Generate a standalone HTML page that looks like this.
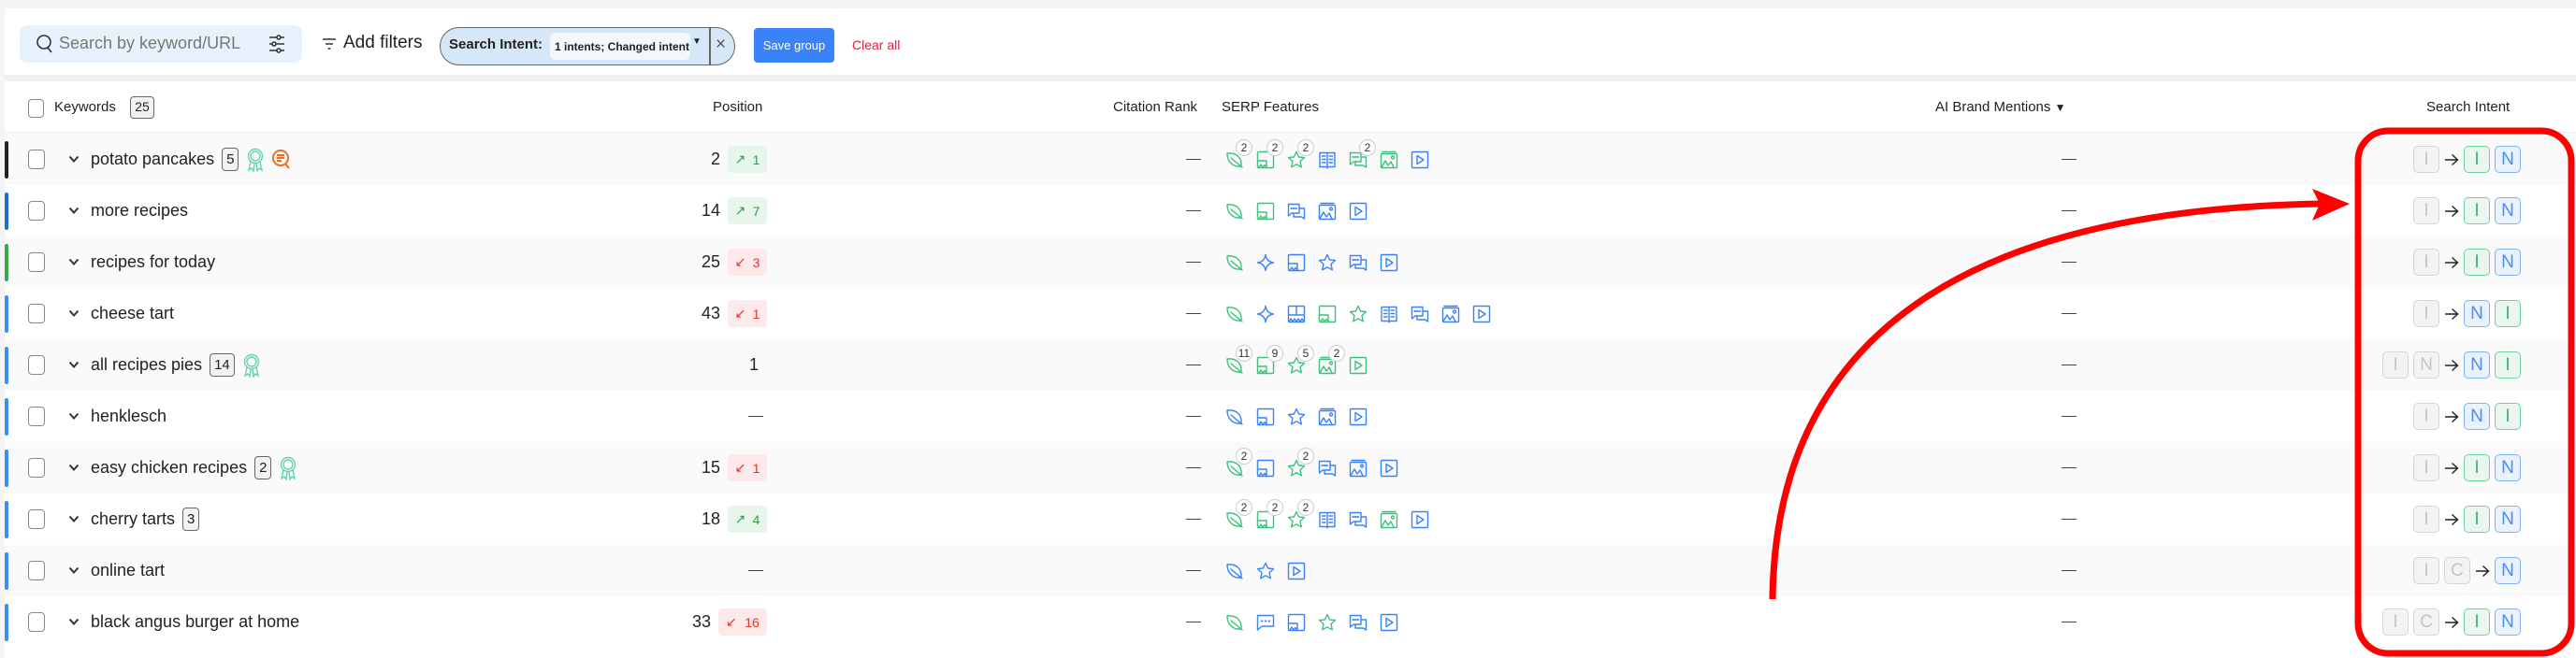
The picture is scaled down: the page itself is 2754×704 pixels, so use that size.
<!DOCTYPE html>
<html><head><meta charset="utf-8">
<style>
*{box-sizing:border-box;margin:0;padding:0}
body{width:2754px;height:704px;overflow:hidden;background:#f3f4f6;font-family:"Liberation Sans",sans-serif;color:#222;position:relative}
.card{position:absolute;left:5px;top:9px;right:0;bottom:0;background:#fff}
.abs{position:absolute}
.sep{position:absolute;left:5px;right:0;top:80px;height:7px;background:#f0f0f0}
.row{position:absolute;left:5px;width:2749px;height:55px}
.row.g{background:#fafafa}
.bar{position:absolute;left:0;top:8px;width:4px;height:40px;border-radius:2px;background:#3b8ff0}
.cb{position:absolute;left:25px;top:17px;width:18px;height:21px;border:1.5px solid #888;border-radius:4px;background:#fff}
.chev{position:absolute;left:68px;top:22px;width:12px;height:10px}
.kw{position:absolute;left:92px;top:0;height:55px;display:flex;align-items:center;font-size:18px;color:#222;white-space:nowrap}
.cnt{display:inline-block;margin-left:8px;border:1.5px solid #666;background:#f2f2f2;border-radius:4px;font-size:15px;padding:2px 4px;line-height:19px}
.rib{margin-left:8px;width:20px;height:26px}
.num{position:absolute;right:1984px;top:17px;font-size:18px;text-align:right}
.bd{position:absolute;left:773px;top:13px;width:42px;height:29px;border-radius:4px;font-size:14px;display:flex;align-items:center;justify-content:space-around;padding:0 4px}
.up{background:#e7f5eb;color:#2aa150}
.dn{background:#fde9e9;color:#e5322d}
.dash{position:absolute;top:27px;width:16px;height:1px;background:#444}
.ic{position:absolute;top:18px;width:20px;height:20px}
.ic svg{width:20px;height:20px;fill:none;stroke:currentColor;stroke-width:1.4;stroke-linejoin:round;stroke-linecap:round}
.gr{color:#3cc27a}.bl{color:#3b82f6}
.c{position:absolute;left:11px;top:-12px;width:18px;height:18px;border-radius:50%;border:1px solid #ccc;background:#fff;font-size:12px;color:#333;text-align:center;line-height:16px}
.it{position:absolute;right:59px;top:13px;display:flex;align-items:center}
.b{width:28px;height:29px;border-radius:5px;border:1.5px solid;font-size:19px;display:flex;align-items:center;justify-content:center;margin-left:5px}
.bg0{background:#f2f3f5;border-color:#d6d6d6;color:#c5c5c5}
.bgG{background:#eaf6ef;border-color:#6fd39f;color:#3cb371}
.bgB{background:#e9f2fd;border-color:#80b2f6;color:#4b8ef0}
.ar{margin-left:5px;width:16px;height:14px}
.hd{position:absolute;top:106px;font-size:15px;color:#222}
</style></head><body>
<svg width="0" height="0" style="position:absolute">
<defs>
<symbol id="leaf" viewBox="0 0 20 20"><path d="M2 3 C11 2 18 7 17 17 C8 18 2 12 2 3 Z M6 8 L18 18"/></symbol>
<symbol id="spk" viewBox="0 0 20 20"><path d="M10 1.5 Q11 9 18.5 10 Q11 11 10 18.5 Q9 11 1.5 10 Q9 9 10 1.5Z"/></symbol>
<symbol id="img" viewBox="0 0 20 20"><rect x="1.5" y="1.5" width="17" height="17" rx="1"/><path d="M1.5 11 H11 V18.5 M3 18 L5 15 L7 18 L9 15.5 L11 18"/></symbol>
<symbol id="top" viewBox="0 0 20 20"><rect x="1.5" y="1.5" width="17" height="17" rx="1"/><path d="M1.5 11 H18.5 M10 2 V11 M2 18 L4 15 L6 18 L8 15 L10 18 L12 15 L14 18 L16 15 L18 18"/></symbol>
<symbol id="star" viewBox="0 0 20 20"><path d="M10 1.5 L12.6 7 L18.5 7.6 L14 11.6 L15.3 17.8 L10 14.8 L4.7 17.8 L6 11.6 L1.5 7.6 L7.4 7 Z"/></symbol>
<symbol id="book" viewBox="0 0 20 20"><path d="M2 2.5 H18 V17.5 H2 Z M10 2.5 V19 M4.5 6 H8 M4.5 9.5 H8 M4.5 13 H8 M12 6 H15.5 M12 9.5 H15.5 M12 13 H15.5"/></symbol>
<symbol id="chat" viewBox="0 0 20 20"><path d="M1.5 2.5 H13 V12 H5 L1.5 15 Z M13 7 H18.5 V18 L15.5 16 H7 V12"/><path d="M4.5 7 h.5 M7 7 h.5 M9.5 7 h.5" stroke-width="2"/></symbol>
<symbol id="gal" viewBox="0 0 20 20"><rect x="1.5" y="3.5" width="17" height="15" rx="1"/><path d="M3 1.5 H17 M2 18 L6 11 L9 16 L12 12 L15 18"/><circle cx="14" cy="7.5" r="1.5"/></symbol>
<symbol id="play" viewBox="0 0 20 20"><rect x="1.5" y="1.5" width="17" height="17" rx="1"/><path d="M7 5.5 L14 10 L7 14.5 Z"/></symbol>
<symbol id="cmt" viewBox="0 0 20 20"><path d="M1.5 2.5 H18.5 V14 H6 L1.5 18 Z"/><path d="M6 8.5 h.5 M9.8 8.5 h.5 M13.5 8.5 h.5" stroke-width="2"/></symbol>
<symbol id="rb" viewBox="0 0 20 26"><circle cx="10" cy="9" r="7.5"/><circle cx="10" cy="9" r="5"/><path d="M5 15 L3 24 L6 22 L8 25 L9 17 M15 15 L17 24 L14 22 L12 25 L11 17"/></symbol>
<symbol id="chv" viewBox="0 0 12 10"><path d="M1.5 2.5 L6 7.5 L10.5 2.5" fill="none" stroke="#333" stroke-width="2"/></symbol>
<symbol id="arr" viewBox="0 0 16 14"><path d="M1 7 H14 M8.5 1.5 L14.5 7 L8.5 12.5" fill="none" stroke="#222" stroke-width="1.4"/></symbol>
</defs></svg>

<div class="card"></div>
<div class="abs" style="left:21px;top:27px;width:302px;height:40px;background:#e8f2fc;border-radius:8px"></div>
<svg class="abs" style="left:38px;top:36px" width="20" height="22" viewBox="0 0 20 22" fill="none" stroke="#333" stroke-width="1.6"><circle cx="9" cy="9" r="7"/><path d="M13 15 L17 20"/></svg>
<div class="abs" style="left:63px;top:36px;font-size:18px;color:#777">Search by keyword/URL</div>
<svg class="abs" style="left:286px;top:36px" width="20" height="22" viewBox="0 0 20 22" fill="none" stroke="#333" stroke-width="1.5"><path d="M2 4 H18 M2 11 H18 M2 18 H18"/><circle cx="12" cy="4" r="2" fill="#e8f2fc"/><circle cx="7" cy="11" r="2" fill="#e8f2fc"/><circle cx="12" cy="18" r="2" fill="#e8f2fc"/></svg>
<svg class="abs" style="left:344px;top:40px" width="16" height="14" viewBox="0 0 16 14" stroke="#333" stroke-width="1.6"><path d="M1 2 H15 M4 7 H12 M6.5 12 H9.5"/></svg>
<div class="abs" style="left:367px;top:35px;font-size:19px;color:#222">Add filters</div>
<div class="abs" style="left:470px;top:29px;width:316px;height:41px;border:1.5px solid #666;border-radius:21px;background:#d6e8f7"></div>
<div class="abs" style="left:480px;top:39px;font-size:15px;font-weight:bold;color:#222">Search Intent:</div>
<div class="abs" style="left:588px;top:35px;width:150px;height:29px;background:#f5f8fb;border-radius:6px"></div>
<div class="abs" style="left:593px;top:43px;font-size:12px;font-weight:bold;color:#222">1 intents; Changed intent</div>
<div class="abs" style="left:740px;top:39px;font-size:10px;color:#222">▼</div>
<div class="abs" style="left:758px;top:30px;width:1.5px;height:39px;background:#666"></div>
<div class="abs" style="left:765px;top:37px;font-size:19px;color:#555">×</div>
<div class="abs" style="left:806px;top:30px;width:86px;height:37px;background:#3a82f7;border-radius:4px;color:#fff;font-size:13px;display:flex;align-items:center;justify-content:center">Save group</div>
<div class="abs" style="left:911px;top:40px;font-size:14px;color:#e0203a">Clear all</div>

<div class="sep"></div>
<div class="abs" style="left:30px;top:106px;width:17px;height:20px;border:1.5px solid #888;border-radius:4px"></div>
<div class="hd" style="left:58px">Keywords</div>
<div class="abs" style="left:139px;top:103px;width:26px;height:24px;border:1.5px solid #666;background:#f2f2f2;border-radius:4px;font-size:14px;text-align:center;line-height:21px">25</div>
<div class="hd" style="left:762px">Position</div>
<div class="hd" style="left:1190px">Citation Rank</div>
<div class="hd" style="left:1306px">SERP Features</div>
<div class="hd" style="left:2069px">AI Brand Mentions <span style="font-size:12px">▼</span></div>
<div class="hd" style="left:2594px">Search Intent</div>
<div class="abs" style="left:5px;right:0;top:141px;height:1px;background:#ececec"></div>

<div class="row g" style="top:143px"><div class="bar" style="background:#222"></div><div class="cb"></div><svg class="chev"><use href="#chv"/></svg>
<div class="kw">potato pancakes<span class="cnt">5</span><svg class="rib" style="color:#62d4b4"><use href="#rb" stroke="currentColor" fill="none" stroke-width="1.4"/></svg><svg width="24" height="24" viewBox="0 0 24 24" fill="none" stroke="#ef6c20" stroke-width="2" style="margin-left:6px"><circle cx="11" cy="10" r="8"/><path d="M7 7 H15 M7 10 H15 M7 13 H12 M16 16 L20 21"/></svg></div>
<div class="num">2</div><div class="bd up"><span>↗</span><span>1</span></div>
<div class="dash" style="left:1263px"></div>
<div class="ic gr" style="left:1305px"><svg><use href="#leaf"/></svg><div class="c">2</div></div>
<div class="ic gr" style="left:1338px"><svg><use href="#img"/></svg><div class="c">2</div></div>
<div class="ic gr" style="left:1371px"><svg><use href="#star"/></svg><div class="c">2</div></div>
<div class="ic bl" style="left:1404px"><svg><use href="#book"/></svg></div>
<div class="ic gr" style="left:1437px"><svg><use href="#chat"/></svg><div class="c">2</div></div>
<div class="ic gr" style="left:1470px"><svg><use href="#gal"/></svg></div>
<div class="ic bl" style="left:1503px"><svg><use href="#play"/></svg></div>
<div class="dash" style="left:2199px"></div>
<div class="it"><div class="b bg0">I</div><svg class="ar"><use href="#arr"/></svg><div class="b bgG">I</div><div class="b bgB">N</div></div>
</div>
<div class="row" style="top:198px"><div class="bar" style="background:#1f6fcf"></div><div class="cb"></div><svg class="chev"><use href="#chv"/></svg>
<div class="kw">more recipes</div>
<div class="num">14</div><div class="bd up"><span>↗</span><span>7</span></div>
<div class="dash" style="left:1263px"></div>
<div class="ic gr" style="left:1305px"><svg><use href="#leaf"/></svg></div>
<div class="ic gr" style="left:1338px"><svg><use href="#img"/></svg></div>
<div class="ic bl" style="left:1371px"><svg><use href="#chat"/></svg></div>
<div class="ic bl" style="left:1404px"><svg><use href="#gal"/></svg></div>
<div class="ic bl" style="left:1437px"><svg><use href="#play"/></svg></div>
<div class="dash" style="left:2199px"></div>
<div class="it"><div class="b bg0">I</div><svg class="ar"><use href="#arr"/></svg><div class="b bgG">I</div><div class="b bgB">N</div></div>
</div>
<div class="row g" style="top:253px"><div class="bar" style="background:#3aa845"></div><div class="cb"></div><svg class="chev"><use href="#chv"/></svg>
<div class="kw">recipes for today</div>
<div class="num">25</div><div class="bd dn"><span>↙</span><span>3</span></div>
<div class="dash" style="left:1263px"></div>
<div class="ic gr" style="left:1305px"><svg><use href="#leaf"/></svg></div>
<div class="ic bl" style="left:1338px"><svg><use href="#spk"/></svg></div>
<div class="ic bl" style="left:1371px"><svg><use href="#img"/></svg></div>
<div class="ic bl" style="left:1404px"><svg><use href="#star"/></svg></div>
<div class="ic bl" style="left:1437px"><svg><use href="#chat"/></svg></div>
<div class="ic bl" style="left:1470px"><svg><use href="#play"/></svg></div>
<div class="dash" style="left:2199px"></div>
<div class="it"><div class="b bg0">I</div><svg class="ar"><use href="#arr"/></svg><div class="b bgG">I</div><div class="b bgB">N</div></div>
</div>
<div class="row" style="top:308px"><div class="bar"></div><div class="cb"></div><svg class="chev"><use href="#chv"/></svg>
<div class="kw">cheese tart</div>
<div class="num">43</div><div class="bd dn"><span>↙</span><span>1</span></div>
<div class="dash" style="left:1263px"></div>
<div class="ic gr" style="left:1305px"><svg><use href="#leaf"/></svg></div>
<div class="ic bl" style="left:1338px"><svg><use href="#spk"/></svg></div>
<div class="ic bl" style="left:1371px"><svg><use href="#top"/></svg></div>
<div class="ic gr" style="left:1404px"><svg><use href="#img"/></svg></div>
<div class="ic gr" style="left:1437px"><svg><use href="#star"/></svg></div>
<div class="ic bl" style="left:1470px"><svg><use href="#book"/></svg></div>
<div class="ic bl" style="left:1503px"><svg><use href="#chat"/></svg></div>
<div class="ic bl" style="left:1536px"><svg><use href="#gal"/></svg></div>
<div class="ic bl" style="left:1569px"><svg><use href="#play"/></svg></div>
<div class="dash" style="left:2199px"></div>
<div class="it"><div class="b bg0">I</div><svg class="ar"><use href="#arr"/></svg><div class="b bgB">N</div><div class="b bgG">I</div></div>
</div>
<div class="row g" style="top:363px"><div class="bar"></div><div class="cb"></div><svg class="chev"><use href="#chv"/></svg>
<div class="kw">all recipes pies<span class="cnt">14</span><svg class="rib" style="color:#62d4b4"><use href="#rb" stroke="currentColor" fill="none" stroke-width="1.4"/></svg></div>
<div class="num" style="right:1943px">1</div>
<div class="dash" style="left:1263px"></div>
<div class="ic gr" style="left:1305px"><svg><use href="#leaf"/></svg><div class="c">11</div></div>
<div class="ic gr" style="left:1338px"><svg><use href="#img"/></svg><div class="c">9</div></div>
<div class="ic gr" style="left:1371px"><svg><use href="#star"/></svg><div class="c">5</div></div>
<div class="ic gr" style="left:1404px"><svg><use href="#gal"/></svg><div class="c">2</div></div>
<div class="ic gr" style="left:1437px"><svg><use href="#play"/></svg></div>
<div class="dash" style="left:2199px"></div>
<div class="it"><div class="b bg0">I</div><div class="b bg0">N</div><svg class="ar"><use href="#arr"/></svg><div class="b bgB">N</div><div class="b bgG">I</div></div>
</div>
<div class="row" style="top:418px"><div class="bar"></div><div class="cb"></div><svg class="chev"><use href="#chv"/></svg>
<div class="kw">henklesch</div>
<div class="dash" style="left:795px"></div>
<div class="dash" style="left:1263px"></div>
<div class="ic bl" style="left:1305px"><svg><use href="#leaf"/></svg></div>
<div class="ic bl" style="left:1338px"><svg><use href="#img"/></svg></div>
<div class="ic bl" style="left:1371px"><svg><use href="#star"/></svg></div>
<div class="ic bl" style="left:1404px"><svg><use href="#gal"/></svg></div>
<div class="ic bl" style="left:1437px"><svg><use href="#play"/></svg></div>
<div class="dash" style="left:2199px"></div>
<div class="it"><div class="b bg0">I</div><svg class="ar"><use href="#arr"/></svg><div class="b bgB">N</div><div class="b bgG">I</div></div>
</div>
<div class="row g" style="top:473px"><div class="bar"></div><div class="cb"></div><svg class="chev"><use href="#chv"/></svg>
<div class="kw">easy chicken recipes<span class="cnt">2</span><svg class="rib" style="color:#62d4b4"><use href="#rb" stroke="currentColor" fill="none" stroke-width="1.4"/></svg></div>
<div class="num">15</div><div class="bd dn"><span>↙</span><span>1</span></div>
<div class="dash" style="left:1263px"></div>
<div class="ic gr" style="left:1305px"><svg><use href="#leaf"/></svg><div class="c">2</div></div>
<div class="ic bl" style="left:1338px"><svg><use href="#img"/></svg></div>
<div class="ic gr" style="left:1371px"><svg><use href="#star"/></svg><div class="c">2</div></div>
<div class="ic bl" style="left:1404px"><svg><use href="#chat"/></svg></div>
<div class="ic bl" style="left:1437px"><svg><use href="#gal"/></svg></div>
<div class="ic bl" style="left:1470px"><svg><use href="#play"/></svg></div>
<div class="dash" style="left:2199px"></div>
<div class="it"><div class="b bg0">I</div><svg class="ar"><use href="#arr"/></svg><div class="b bgG">I</div><div class="b bgB">N</div></div>
</div>
<div class="row" style="top:528px"><div class="bar"></div><div class="cb"></div><svg class="chev"><use href="#chv"/></svg>
<div class="kw">cherry tarts<span class="cnt">3</span></div>
<div class="num">18</div><div class="bd up"><span>↗</span><span>4</span></div>
<div class="dash" style="left:1263px"></div>
<div class="ic gr" style="left:1305px"><svg><use href="#leaf"/></svg><div class="c">2</div></div>
<div class="ic gr" style="left:1338px"><svg><use href="#img"/></svg><div class="c">2</div></div>
<div class="ic gr" style="left:1371px"><svg><use href="#star"/></svg><div class="c">2</div></div>
<div class="ic bl" style="left:1404px"><svg><use href="#book"/></svg></div>
<div class="ic bl" style="left:1437px"><svg><use href="#chat"/></svg></div>
<div class="ic gr" style="left:1470px"><svg><use href="#gal"/></svg></div>
<div class="ic bl" style="left:1503px"><svg><use href="#play"/></svg></div>
<div class="dash" style="left:2199px"></div>
<div class="it"><div class="b bg0">I</div><svg class="ar"><use href="#arr"/></svg><div class="b bgG">I</div><div class="b bgB">N</div></div>
</div>
<div class="row g" style="top:583px"><div class="bar"></div><div class="cb"></div><svg class="chev"><use href="#chv"/></svg>
<div class="kw">online tart</div>
<div class="dash" style="left:795px"></div>
<div class="dash" style="left:1263px"></div>
<div class="ic bl" style="left:1305px"><svg><use href="#leaf"/></svg></div>
<div class="ic bl" style="left:1338px"><svg><use href="#star"/></svg></div>
<div class="ic bl" style="left:1371px"><svg><use href="#play"/></svg></div>
<div class="dash" style="left:2199px"></div>
<div class="it"><div class="b bg0">I</div><div class="b bg0">C</div><svg class="ar"><use href="#arr"/></svg><div class="b bgB">N</div></div>
</div>
<div class="row" style="top:638px"><div class="bar"></div><div class="cb"></div><svg class="chev"><use href="#chv"/></svg>
<div class="kw">black angus burger at home</div>
<div class="num" style="right:1994px">33</div><div class="bd dn" style="left:763px;width:52px"><span>↙</span><span>16</span></div>
<div class="dash" style="left:1263px"></div>
<div class="ic gr" style="left:1305px"><svg><use href="#leaf"/></svg></div>
<div class="ic bl" style="left:1338px"><svg><use href="#cmt"/></svg></div>
<div class="ic bl" style="left:1371px"><svg><use href="#img"/></svg></div>
<div class="ic gr" style="left:1404px"><svg><use href="#star"/></svg></div>
<div class="ic bl" style="left:1437px"><svg><use href="#chat"/></svg></div>
<div class="ic bl" style="left:1470px"><svg><use href="#play"/></svg></div>
<div class="dash" style="left:2199px"></div>
<div class="it"><div class="b bg0">I</div><div class="b bg0">C</div><svg class="ar"><use href="#arr"/></svg><div class="b bgG">I</div><div class="b bgB">N</div></div>
</div>

<svg class="abs" style="left:0;top:0" width="2754" height="704">
<rect x="2521" y="140" width="228" height="559" rx="32" fill="none" stroke="#ff0000" stroke-width="7"/>
<path d="M1895 641 C1898 390 2060 225 2482 218" fill="none" stroke="#ff0000" stroke-width="7"/>
<path d="M2512 218 L2472 202 L2480 218 L2472 236 Z" fill="#ff0000"/>
</svg>
</body></html>
